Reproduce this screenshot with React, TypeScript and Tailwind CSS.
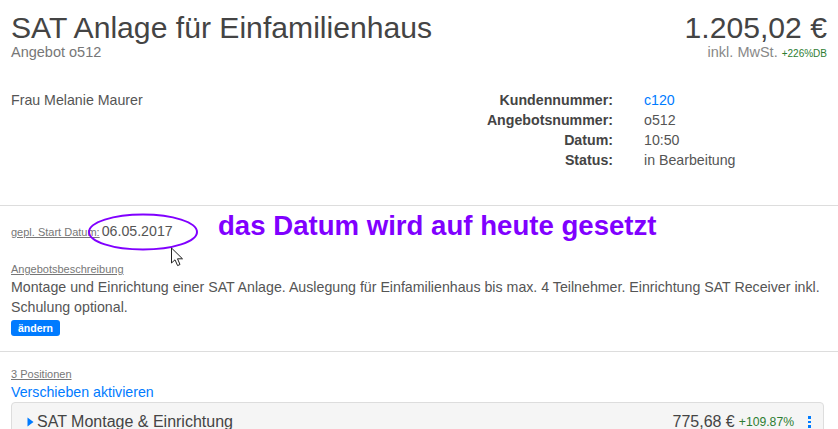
import React from 'react';

const rows = [
  { label: 'Kundennummer:', value: 'c120', link: true },
  { label: 'Angebotsnummer:', value: 'o512' },
  { label: 'Datum:', value: '10:50' },
  { label: 'Status:', value: 'in Bearbeitung' },
];

export default function App() {
  return (
    <div className="relative h-[429px] w-[838px] overflow-hidden bg-white text-[14.2px] leading-[20px] text-[#555] font-['Liberation_Sans',Arial,sans-serif]">
      <div className="flex items-start justify-between pl-[11px] pr-[11px] pt-[12px]">
        <div>
          <h1 className="text-[30.15px] leading-[32px] text-[#444]">SAT Anlage für Einfamilienhaus</h1>
          <div className="text-[14.5px] leading-[16px] text-[#777]">Angebot o512</div>
        </div>
        <div className="text-right">
          <div className="text-[30.15px] leading-[32px] text-[#444]">1.205,02 €</div>
          <div className="text-[14.5px] leading-[16px] text-[#888]">
            inkl. MwSt. <span className="text-[10px] text-[#2e7d32]">+226%DB</span>
          </div>
        </div>
      </div>

      <div className="mt-[28px] flex border-b border-[#ddd] pb-[35px] pl-[11px]">
        <div className="w-[419px]">Frau Melanie Maurer</div>
        <div className="flex flex-col">
          {rows.map((r) => (
            <div key={r.label} className="flex">
              <div className="w-[183px] text-right font-bold text-[#444]">{r.label}</div>
              <div className={`ml-[31px] ${r.link ? 'text-[#007bff]' : ''}`}>{r.value}</div>
            </div>
          ))}
        </div>
      </div>

      <div className="border-b border-[#ddd] pb-[15px] pl-[11px] pr-[11px] pt-[15px]">
        <div className="flex items-baseline gap-[2px]">
          <span className="text-[11px] text-[#777] underline">gepl. Start Datum:</span>
          <span className="text-[14.2px] leading-[20px]">06.05.2017</span>
        </div>
        <div className="mt-[21px] text-[11px] leading-[12px] text-[#777] underline">Angebotsbeschreibung</div>
        <p className="mt-[2px]">
          Montage und Einrichtung einer SAT Anlage. Auslegung für Einfamilienhaus bis max. 4 Teilnehmer. Einrichtung SAT Receiver inkl. Schulung optional.
        </p>
        <button className="mt-[3px] block h-[16px] rounded-[3px] bg-[#007bff] px-[7px] text-[10.5px] font-bold leading-[16px] text-white">
          ändern
        </button>
      </div>

      <div className="pl-[11px] pr-[14px] pt-[16px]">
        <div className="text-[11px] leading-[12px] text-[#777] underline">3 Positionen</div>
        <div className="mt-[2px] text-[#007bff]">Verschieben aktivieren</div>
        <div className="flex h-[60px] items-start justify-between rounded-[4px] border border-[#ddd] bg-[#f5f5f5] pl-[15px] pr-[12px] pt-[9px]">
          <div className="flex items-center gap-[2px] text-[16px] leading-[20px] text-[#444]">
            <svg width="7" height="10" viewBox="0 0 7 10" className="mr-[1px]">
              <path d="M0.5 0.5 L6.5 5 L0.5 9.5 Z" fill="#007bff" />
            </svg>
            SAT Montage &amp; Einrichtung
          </div>
          <div className="flex items-center text-[16px] leading-[20px] text-[#444]">
            775,68 €
            <span className="ml-[4px] text-[12.2px] text-[#2e7d32]">+109.87%</span>
            <span className="ml-[14px] flex flex-col gap-[2px]">
              <span className="block h-[2.5px] w-[3px] bg-[#007bff]" />
              <span className="block h-[2.5px] w-[3px] bg-[#007bff]" />
              <span className="block h-[2.5px] w-[3px] bg-[#007bff]" />
            </span>
          </div>
        </div>
      </div>

      {/* annotation drawn on top of the screenshot */}
      <svg className="absolute left-[85px] top-[211px]" width="116" height="42" viewBox="0 0 116 42">
        <ellipse cx="58" cy="21" rx="54" ry="17.5" fill="none" stroke="#8000ff" strokeWidth="2" />
      </svg>
      <svg className="absolute left-[170px] top-[247px]" width="15" height="20" viewBox="0 0 15 20">
        <path d="M1.5 1 L1.5 16 L5 12.8 L7.6 18.6 L10 17.5 L7.5 11.8 L12.5 11.8 Z" fill="#fff" stroke="#222" strokeWidth="1" />
      </svg>
      <div className="absolute left-[218px] top-[211px] text-[27.6px] font-bold leading-[30px] text-[#8000ff]">
        das Datum wird auf heute gesetzt
      </div>
    </div>
  );
}
